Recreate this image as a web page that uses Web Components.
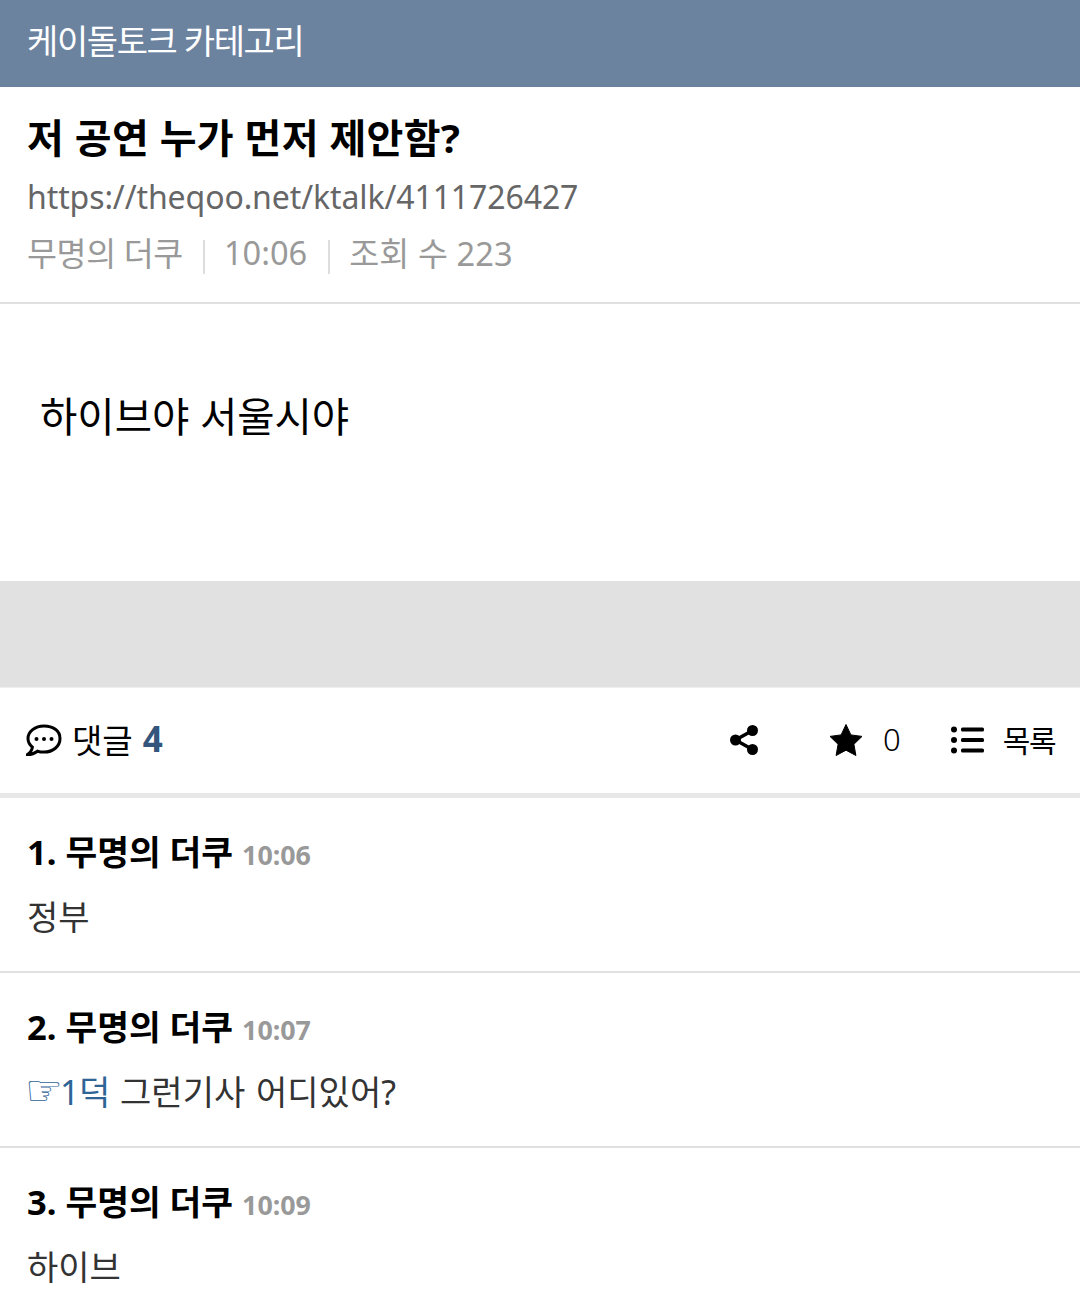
<!DOCTYPE html>
<html lang="ko">
<head>
<meta charset="utf-8">
<title>케이돌토크 카테고리</title>
<style>
  html, body { margin: 0; padding: 0; background: #fff; }
  body { font-family: "Noto Sans", "Noto Sans CJK KR", sans-serif; height: 1312px; overflow: hidden; }
</style>
</head>
<body>
<top-bar>케이돌토크 카테고리</top-bar>
<post-head title-text="저 공연 누가 먼저 제안함?" url="https://theqoo.net/ktalk/4111726427" author="무명의 더쿠" time="10:06" views="조회 수 223"></post-head>
<post-body>하이브야 서울시야</post-body>
<gray-gap></gray-gap>
<comment-bar count="4" stars="0"></comment-bar>
<comment-item num="1" time="10:06">정부</comment-item>
<comment-item num="2" time="10:07"><reply-ref>1덕</reply-ref> 그런기사 어디있어?</comment-item>
<comment-item num="3" time="10:09" last>하이브</comment-item>

<script>
  const FONT = '"Noto Sans", "Noto Sans CJK KR", sans-serif';

  class TopBar extends HTMLElement {
    constructor() {
      super();
      this.attachShadow({ mode: 'open' });
      this.shadowRoot.innerHTML = `
        <style>
          :host {
            display: flex;
            align-items: center;
            height: 78px;
            padding: 0 27px 9px;
            background: #6c83a0;
            color: #fff;
            font-size: 34px;
            letter-spacing: -1.4px;
            font-family: ${FONT};
          }
        </style>
        <slot></slot>
      `;
    }
  }

  class PostHead extends HTMLElement {
    constructor() {
      super();
      this.attachShadow({ mode: 'open' });
      this.shadowRoot.innerHTML = `
        <style>
          :host {
            display: block;
            height: 215px;
            border-bottom: 2px solid #e0e0e0;
            padding: 0 27px;
            font-family: ${FONT};
          }
          h1 {
            margin: 0;
            padding-top: 26px;
            font-size: 40px;
            line-height: 50px;
            font-weight: 700;
            letter-spacing: 0.3px;
            color: #000;
          }
          .url {
            margin-top: 11px;
            font-size: 32px;
            line-height: 46px;
            letter-spacing: -0.1px;
            color: #666;
          }
          .meta {
            display: flex;
            align-items: center;
            margin-top: 9px;
            height: 46px;
            font-size: 32.6px;
            color: #999;
          }
          .author { letter-spacing: -0.4px; }
          .views { letter-spacing: 0.1px; }
          .sep {
            width: 2px;
            height: 34px;
            margin: 9px 19px 0 20px;
            background: #ddd;
          }
          .sep + .time + .sep { margin-left: 21px; }
        </style>
        <h1></h1>
        <div class="url"></div>
        <div class="meta">
          <span class="author"></span><i class="sep"></i>
          <span class="time"></span><i class="sep"></i>
          <span class="views"></span>
        </div>
      `;
    }
    connectedCallback() {
      const root = this.shadowRoot;
      root.querySelector('h1').textContent = this.getAttribute('title-text');
      root.querySelector('.url').textContent = this.getAttribute('url');
      root.querySelector('.author').textContent = this.getAttribute('author');
      root.querySelector('.time').textContent = this.getAttribute('time');
      root.querySelector('.views').textContent = this.getAttribute('views');
    }
  }

  class PostBody extends HTMLElement {
    constructor() {
      super();
      this.attachShadow({ mode: 'open' });
      this.shadowRoot.innerHTML = `
        <style>
          :host {
            display: block;
            height: 277px;
            box-sizing: border-box;
            padding: 84px 40px 0;
            font-size: 40.6px;
            line-height: 58px;
            color: #000;
            font-family: ${FONT};
          }
        </style>
        <slot></slot>
      `;
    }
  }

  class GrayGap extends HTMLElement {
    constructor() {
      super();
      this.attachShadow({ mode: 'open' });
      this.shadowRoot.innerHTML = `
        <style>
          :host { display: block; height: 106px; background: #e1e1e1; border-bottom: 1px solid #eee; }
        </style>
      `;
    }
  }

  class CommentBar extends HTMLElement {
    constructor() {
      super();
      this.attachShadow({ mode: 'open' });
      this.shadowRoot.innerHTML = `
        <style>
          :host {
            display: flex;
            align-items: center;
            height: 103px;
            padding: 0 25px 2px 26px;
            border-bottom: 5px solid #e8e8e8;
            font-family: ${FONT};
            color: #000;
            font-size: 33px;
          }
          .label { display: flex; align-items: center; flex: 1; }
          .label svg { margin-right: 10px; }
          .label span, b { position: relative; top: -1px; }
          b { color: #34557c; margin-left: 10px; font-weight: 700; font-size: 35px; }
          .item { display: flex; align-items: center; }
          .share { margin-right: 70px; }
          .star { margin-right: 50px; }
          .star span { margin-left: 20px; font-size: 31px; font-weight: 300; position: relative; top: -1px; }
          .list span { margin-left: 19px; font-size: 30px; letter-spacing: -1.5px; position: relative; top: -1px; }
        </style>
        <div class="label">
          <svg width="36" height="32" viewBox="0 0 36 32" fill="none" stroke="#000" stroke-width="3">
            <path d="M18 2C9 2 2 7.600 2 14.500c0 3.400 1.700 6.400 4.400 8.600C6 25.800 4.500 28.500 1.500 30.500c3.800 0 7.600-1.400 10-3.300 2 .6 4.200.9 6.500.9 9 0 16-5.700 16-13.600S27 2 18 2z"/>
            <g fill="#000" stroke="none"><circle cx="10.500" cy="15" r="2"/><circle cx="18" cy="15" r="2"/><circle cx="25.500" cy="15" r="2"/></g>
          </svg>
          <span>댓글</span><b></b>
        </div>
        <div class="item share">
          <svg width="30" height="32" viewBox="0 0 30 32" fill="#000">
            <circle cx="23.500" cy="6.500" r="5.500"/><circle cx="6.500" cy="16" r="5.500"/><circle cx="23.500" cy="25.500" r="5.500"/>
            <path d="M6.500 16L23.500 6.500M6.500 16l17 9.500" stroke="#000" stroke-width="3.500"/>
          </svg>
        </div>
        <div class="item star">
          <svg width="34" height="32" viewBox="0 0 34 32" fill="#000">
            <path d="M17 0.500l4.900 10.400 11.100 1.500-8.100 7.900 2 11.200L17 26.200 7.100 31.500l2-11.200L1 12.400l11.100-1.500z" stroke="#000" stroke-width="1" stroke-linejoin="round"/>
          </svg>
          <span></span>
        </div>
        <div class="item list">
          <svg width="33" height="28" viewBox="0 0 33 28" fill="#000">
            <circle cx="3" cy="3.500" r="3"/><circle cx="3" cy="14" r="3"/><circle cx="3" cy="24.500" r="3"/>
            <rect x="10" y="1.500" width="23" height="4" rx="1.500"/><rect x="10" y="12" width="23" height="4" rx="1.500"/><rect x="10" y="22.500" width="23" height="4" rx="1.500"/>
          </svg>
          <span>목록</span>
        </div>
      `;
    }
    connectedCallback() {
      this.shadowRoot.querySelector('b').textContent = this.getAttribute('count');
      this.shadowRoot.querySelector('.star span').textContent = this.getAttribute('stars');
    }
  }

  class CommentItem extends HTMLElement {
    constructor() {
      super();
      this.attachShadow({ mode: 'open' });
      this.shadowRoot.innerHTML = `
        <style>
          :host {
            display: block;
            height: 173px;
            border-bottom: 2px solid #e0e0e0;
            padding: 0 27px;
            font-family: ${FONT};
          }
          :host([last]) { border-bottom: 0; }
          .head {
            display: flex;
            align-items: baseline;
            padding-top: 30px;
            height: 48px;
            line-height: 48px;
            font-size: 34.5px;
            font-weight: 700;
            color: #000;
          }
          .time { margin-left: 9px; font-size: 26.8px; color: #999; }
          .text {
            margin-top: 18px;
            font-size: 34px;
            line-height: 46px;
            word-spacing: 2px;
            color: #333;
          }
        </style>
        <div class="head"><span class="who"></span><span class="time"></span></div>
        <div class="text"><slot></slot></div>
      `;
    }
    connectedCallback() {
      this.shadowRoot.querySelector('.who').textContent = this.getAttribute('num') + '. 무명의 더쿠';
      this.shadowRoot.querySelector('.time').textContent = this.getAttribute('time');
    }
  }

  class ReplyRef extends HTMLElement {
    constructor() {
      super();
      this.attachShadow({ mode: 'open' });
      this.shadowRoot.innerHTML = `
        <style>
          :host { color: #2f6496; letter-spacing: -0.5px; }
          .hand {
            display: inline-block;
            width: 33px;
            margin-left: -2px;
            margin-right: 2px;
            font-family: "DejaVu Sans", sans-serif;
            font-size: 42px;
            line-height: 0;
            letter-spacing: -6px;
          }
        </style>
        <span class="hand">☞</span><slot></slot>
      `;
    }
  }

  customElements.define('top-bar', TopBar);
  customElements.define('post-head', PostHead);
  customElements.define('post-body', PostBody);
  customElements.define('gray-gap', GrayGap);
  customElements.define('comment-bar', CommentBar);
  customElements.define('comment-item', CommentItem);
  customElements.define('reply-ref', ReplyRef);
</script>
</body>
</html>
